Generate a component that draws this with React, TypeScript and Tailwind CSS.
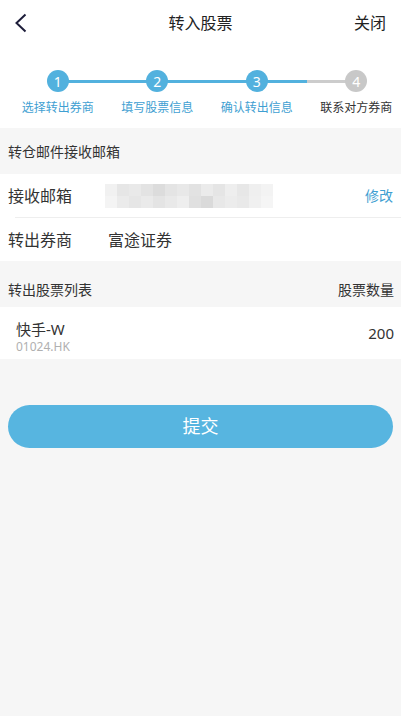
const steps = [
  { n: 1, label: '选择转出券商', done: true },
  { n: 2, label: '填写股票信息', done: true },
  { n: 3, label: '确认转出信息', done: true },
  { n: 4, label: '联系对方券商', done: false },
];

// pixelated (mosaic) email placeholder
const mosaic = [
  ['bg-[#f1f1f1]', 'bg-[#e6e6e6]', 'bg-[#e9e9e9]', 'bg-[#e3e3e3]', 'bg-[#dcdcdc]', 'bg-[#e4e4e4]', 'bg-[#e8e8e8]', 'bg-[#e2e2e2]', 'bg-[#ebebeb]', 'bg-[#e5e5e5]', 'bg-[#eeeeee]', 'bg-[#e7e7e7]', 'bg-[#efefef]', 'bg-[#f3f3f3]'],
  ['bg-[#f4f4f4]', 'bg-[#ebebeb]', 'bg-[#e6e6e6]', 'bg-[#eaeaea]', 'bg-[#e4e4e4]', 'bg-[#e9e9e9]', 'bg-[#eeeeee]', 'bg-[#e0e0e0]', 'bg-[#dadada]', 'bg-[#e8e8e8]', 'bg-[#ececec]', 'bg-[#e9e9e9]', 'bg-[#f0f0f0]', 'bg-[#f5f5f5]'],
];

function Stepper() {
  return (
    <div className="flex pl-[8px] pt-[24px] pb-[13px] overflow-hidden">
      {steps.map((s, i) => {
        const leftBlue = i > 0 && steps[i].done;
        const rightBlue = i < 3 && (steps[i + 1].done || i === 2);
        return (
          <div key={s.n} className="w-[99.5px] shrink-0 flex flex-col items-center">
            <div className="relative w-full h-[22px] flex items-center justify-center">
              {i > 0 && (
                <div
                  className={`absolute left-0 w-1/2 h-[3px] top-[9.5px] ${leftBlue ? 'bg-[#52b1de]' : 'bg-[#cccccc]'}`}
                />
              )}
              {i < 3 && (
                <div
                  className={`absolute right-0 w-1/2 h-[3px] top-[9.5px] ${rightBlue ? 'bg-[#52b1de]' : 'bg-[#cccccc]'}`}
                />
              )}
              <div
                className={`relative w-[22px] h-[22px] rounded-full flex items-center justify-center text-white text-[14px] ${s.done ? 'bg-[#52b1de]' : 'bg-[#c8c8c8]'}`}
              >
                {s.n}
              </div>
            </div>
            <div
              className={`mt-[9px] text-[12px] leading-[14px] whitespace-nowrap ${s.done ? 'text-[#3f9fd2]' : 'text-[#333333]'}`}
            >
              {s.label}
            </div>
          </div>
        );
      })}
    </div>
  );
}

export default function App() {
  return (
    <div
      className="w-[401px] h-[716px] bg-[#f6f6f6] text-[#333333] overflow-hidden"
      style={{ fontFamily: '"Noto Sans", "Noto Sans CJK SC", sans-serif' }}
    >
      <div className="bg-white">
        <div className="h-[46px] grid grid-cols-3 items-center px-[15px]">
          <svg width="12" height="20" viewBox="0 0 12 20" className="mt-[-1px]">
            <polyline points="10.5,1.5 1.5,10 10.5,18.5" fill="none" stroke="#1d1d3a" strokeWidth="2" />
          </svg>
          <span className="text-[16px] text-[#222222] text-center">转入股票</span>
          <span className="text-[16px] text-[#222222] text-right">关闭</span>
        </div>
        <Stepper />
      </div>

      <div className="h-[46px] flex items-center px-[8px] text-[14px]">转仓邮件接收邮箱</div>

      <div className="bg-white">
        <div className="h-[43px] flex items-center px-[8px] text-[16px]">
          <span className="w-[97px]">接收邮箱</span>
          <div className="flex flex-col">
            {mosaic.map((row, r) => (
              <div key={r} className="flex">
                {row.map((c, k) => (
                  <div key={k} className={`w-[12px] h-[12px] ${c}`} />
                ))}
              </div>
            ))}
          </div>
          <span className="ml-auto text-[14px] text-[#3f9fd2]">修改</span>
        </div>
        <div className="ml-[15px] h-px bg-[#eeeeee]" />
        <div className="h-[43px] flex items-center px-[8px] text-[16px]">
          <span className="w-[100px]">转出券商</span>
          <span>富途证券</span>
        </div>
      </div>

      <div className="h-[46px] flex items-end justify-between pr-[7px] pl-[8px] pb-[7px] text-[14px]">
        <span>转出股票列表</span>
        <span>股票数量</span>
      </div>

      <div className="bg-white h-[52px] flex justify-between pl-[16px] pr-[7px]">
        <div className="flex flex-col pt-[12px]">
          <span className="text-[15px] leading-[20px]">快手-W</span>
          <span className="text-[12px] leading-[15px] text-[#b0b0b0]">01024.HK</span>
        </div>
        <span className="self-center text-[15px]">200</span>
      </div>

      <div className="px-[8px] mt-[46px]">
        <button
          type="button"
          className="w-[385px] h-[43px] rounded-full bg-[#57b5e0] text-white text-[18px] flex items-center justify-center"
        >
          提交
        </button>
      </div>
    </div>
  );
}
